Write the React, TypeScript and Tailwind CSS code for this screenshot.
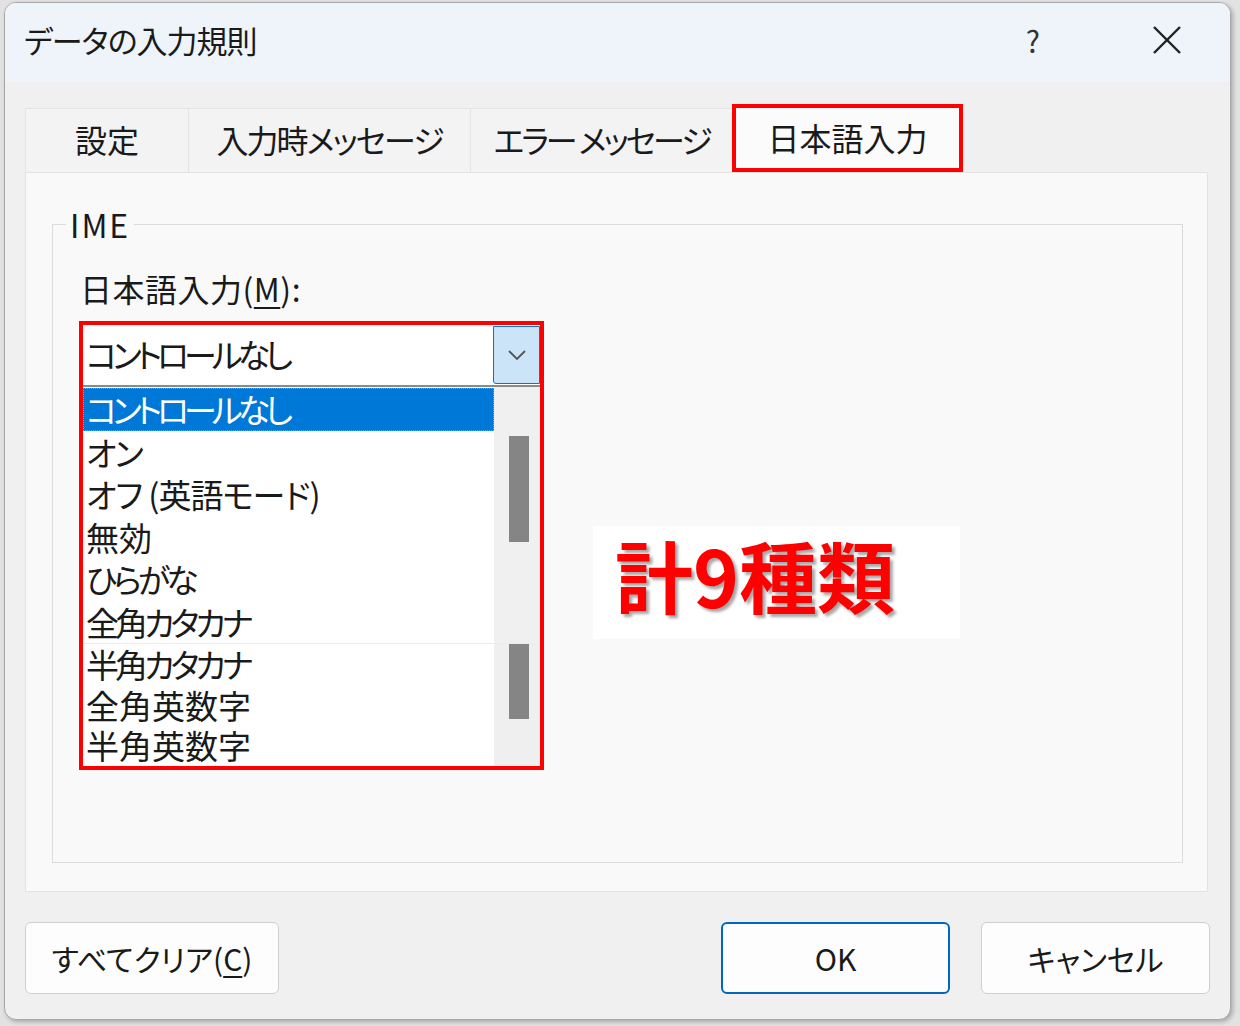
const items = [
  { text: 'オン', cls: 'tracking-[-2px]' },
  { text: 'オフ (英語モード)', cls: 'tracking-[-1px]' },
  { text: '無効', cls: '' },
  { text: 'ひらがな', cls: 'tracking-[-4px]' },
  { text: '全角カタカナ', cls: 'tracking-[-4px]' },
];

const lowerItems = [
  { text: '半角カタカナ', cls: 'tracking-[-4px]' },
  { text: '全角英数字', cls: '' },
  { text: '半角英数字', cls: '' },
];

const tabs = [
  { label: '設定', w: 'w-[163px]', cls: '' },
  { label: '入力時メッセージ', w: 'w-[282px]', cls: 'tracking-[-2px]' },
  { label: 'エラー メッセージ', w: 'w-[262px]', cls: 'tracking-[-3px]' },
];

export default function App() {
  return (
    <div className="w-[1240px] h-[1026px] overflow-hidden bg-[#e2e2e2] pt-[2px] pl-[4px] font-['Noto_Sans_CJK_JP','Noto_Sans',sans-serif] [font-feature-settings:'palt'] text-[#1a1a1a]">
      <div className="w-[1227px] h-[1018px] rounded-[12px] border border-[#a8a8a8] bg-[#f0f0f0] overflow-hidden flex flex-col shadow-[2px_2px_4px_rgba(0,0,0,0.25)]">
        {/* Title bar */}
        <div className="h-[79px] shrink-0 bg-[#eef4fa] flex items-center pl-[19px] pb-[6px]">
          <span className="text-[31px] leading-none tracking-[-1px]">データの入力規則</span>
          <span className="ml-auto text-[30px] leading-none text-[#333] mr-[112px]">?</span>
          <svg width="30" height="30" viewBox="0 0 30 30" className="mr-[48px]">
            <line x1="2" y1="2" x2="28" y2="28" stroke="#222" strokeWidth="2.4" />
            <line x1="28" y1="2" x2="2" y2="28" stroke="#222" strokeWidth="2.4" />
          </svg>
        </div>

        <div className="pl-[20px] pr-[22px]">
          {/* Tabs */}
          <div className="mt-[22px] h-[68px] flex items-end">
            {tabs.map((t) => (
              <div
                key={t.label}
                className={`${t.w} h-[64px] bg-[#f3f3f3] border-t border-l border-[#e3e3e3] flex items-center justify-center pb-[4px] text-[32px] leading-none whitespace-nowrap`}
              >
                <span className={t.cls}>{t.label}</span>
              </div>
            ))}
            <div className="w-[231px] h-[68px] border-4 border-[#ff0000] bg-[#fbfbfb] flex items-center justify-center pb-[2px] text-[32px] leading-none">
              日本語入力
            </div>
          </div>

          {/* Tab panel */}
          <div className="h-[720px] border border-[#e3e3e3] bg-[#f9f9f9] pt-[34px] pl-[26px]">
            <fieldset className="w-[1131px] h-[656px] border border-[#dcdcdc] pl-[13px]">
              <legend className="px-[4px] text-[32px] leading-[34px] tracking-[2px]">IME</legend>
              <div className="ml-[13px]">
                <div className="mt-[27px] pl-[1px] text-[32px] leading-[40px] tracking-[0.5px]">
                  日本語入力(<span className="underline underline-offset-[5px] decoration-[2px]">M</span>):
                </div>

                <div className="mt-[13px] flex items-start">
                  {/* Combo + dropdown list */}
                  <div className="w-[465px] h-[449px] border-4 border-[#ff0000] bg-white flex flex-col">
                    <div className="h-[62px] shrink-0 flex border-b-2 border-[#8a8a8a]">
                      <div className="flex-1 pl-[3px] flex items-center pb-[2px] text-[33px] leading-none tracking-[-5px]">
                        コントロールなし
                      </div>
                      <div className="w-[47px] mt-px mb-[1px] bg-[#cce4f7] border border-[#0078d4] rounded-bl-[3px] flex items-center justify-center">
                        <svg width="20" height="12" viewBox="0 0 20 12">
                          <polyline points="2,2 10,10 18,2" fill="none" stroke="#555" strokeWidth="1.8" />
                        </svg>
                      </div>
                    </div>

                    {/* Upper part of the list */}
                    <div className="h-[256px] shrink-0 flex">
                      <div className="flex-1 pt-px">
                        <div className="h-[42.5px] bg-[#0078d7] border border-dotted border-[#e0883a] text-white pl-[2px] flex items-center text-[33px] leading-[40px] tracking-[-5px]">
                          コントロールなし
                        </div>
                        {items.map((it) => (
                          <div
                            key={it.text}
                            className={`h-[42.5px] pl-[3px] flex items-center text-[33px] leading-[42px] whitespace-nowrap ${it.cls}`}
                          >
                            {it.text}
                          </div>
                        ))}
                      </div>
                      <div className="w-[46px] bg-[#f0f0f0] pt-[49px] pl-[15px]">
                        <div className="w-[20px] h-[106px] bg-[#858585]" />
                      </div>
                    </div>

                    {/* Lower part of the list */}
                    <div className="flex-1 flex border-t border-[#ececec]">
                      <div className="flex-1">
                        {lowerItems.map((it) => (
                          <div
                            key={it.text}
                            className={`h-[40.5px] pl-[3px] flex items-center text-[33px] leading-[40px] whitespace-nowrap ${it.cls}`}
                          >
                            {it.text}
                          </div>
                        ))}
                      </div>
                      <div className="w-[46px] bg-[#efefef] pl-[15px]">
                        <div className="w-[20px] h-[75px] bg-[#858585]" />
                      </div>
                    </div>
                  </div>

                  {/* Callout */}
                  <div className="ml-[49px] mt-[205px] w-[367px] h-[113px] bg-white pl-[22px] pb-[18px] flex items-center">
                    <span className="text-[78px] font-bold leading-none text-[#ff0000] [text-shadow:3px_3px_3px_rgba(0,0,0,0.35)]">
                      計9種類
                    </span>
                  </div>
                </div>
              </div>
            </fieldset>
          </div>

          {/* Buttons */}
          <div className="mt-[30px] h-[72px] flex -mr-[2px]">
            <button className="w-[254px] h-[72px] rounded-[6px] border border-[#cfcfcf] bg-[#fdfdfd] text-[30px] leading-none">
              すべてクリア(<span className="underline underline-offset-[5px] decoration-[2px]">C</span>)
            </button>
            <button className="ml-auto w-[229px] h-[72px] rounded-[6px] border-2 border-[#0067c0] bg-[#fdfdfd] text-[30px] leading-none">
              OK
            </button>
            <button className="ml-[31px] w-[229px] h-[72px] rounded-[6px] border border-[#cfcfcf] bg-[#fdfdfd] text-[30px] leading-none">
              キャンセル
            </button>
          </div>
        </div>
      </div>
    </div>
  );
}
